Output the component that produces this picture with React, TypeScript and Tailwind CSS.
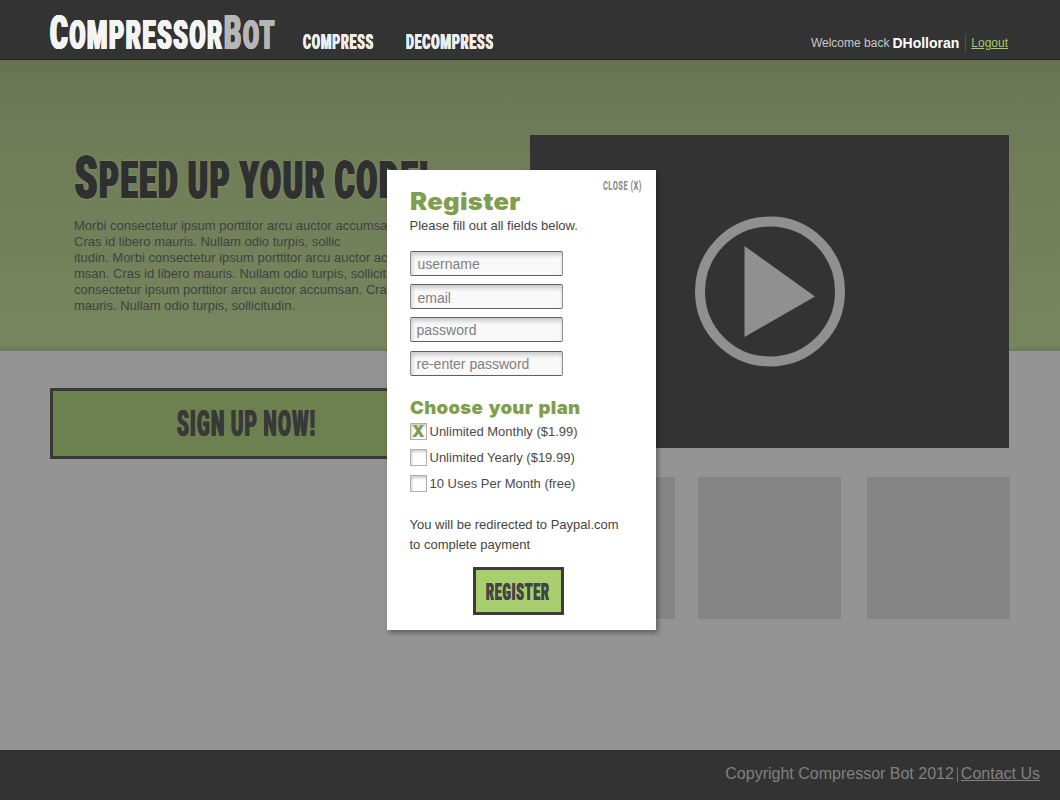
import { useLayoutEffect, useRef, useState } from "react";
import type { ReactNode } from "react";

/** Sets one line of type and condenses (or widens) it to fill its own box. */
function Fit({ className, children }: { className: string; children: ReactNode }) {
  const outer = useRef<HTMLSpanElement>(null);
  const inner = useRef<HTMLSpanElement>(null);
  const [scale, setScale] = useState(1);

  useLayoutEffect(() => {
    if (outer.current && inner.current) {
      setScale(outer.current.clientWidth / inner.current.offsetWidth);
    }
  }, []);

  return (
    <span ref={outer} className={`block whitespace-nowrap ${className}`}>
      <span ref={inner} className="inline-block origin-left" style={{ transform: `scaleX(${scale})` }}>
        {children}
      </span>
    </span>
  );
}

function Header() {
  return (
    <header className="flex h-[60px] items-start border-b border-[#262626] bg-[#333333] pl-[49.5px] pr-[52px]">
      <a className="mt-[5px] h-[55px]">
        <Fit className="h-[55px] w-[225.5px] font-['Roboto'] text-[41px] leading-[55px] font-black uppercase tracking-[3px]">
          <span className="text-[#f4f4f4] [text-shadow:0.7px_0_#f4f4f4,-0.7px_0_#f4f4f4,1.3px_0_#f4f4f4,-1.3px_0_#f4f4f4]">
            <span className="text-[48px]">C</span>ompressor
          </span>
          <span className="text-[#b6b6b6] [text-shadow:0.7px_0_#b6b6b6,-0.7px_0_#b6b6b6,1.3px_0_#b6b6b6,-1.3px_0_#b6b6b6]">
            <span className="text-[48px]">B</span>ot
          </span>
        </Fit>
      </a>
      <nav className="ml-[28px] mt-[30px] flex gap-[32px] font-['Roboto'] text-[20px] leading-[24px] font-black tracking-[1.4px] text-[#eeeeee] [text-shadow:0.5px_0_#eeeeee,-0.5px_0_#eeeeee]">
        <Fit className="w-[71px]">COMPRESS</Fit>
        <Fit className="w-[88px]">DECOMPRESS</Fit>
      </nav>
      <div className="ml-auto mt-[33px] flex h-[20px] items-center text-[12px] text-[#c8c8c8]">
        <span>Welcome back</span>
        <b className="ml-[3px] text-[14px] text-white">DHolloran</b>
        <span className="ml-[6px] mr-[5px] h-[18px] w-px bg-[#505050]" />
        <a className="text-[#a3cc66] underline">Logout</a>
      </div>
    </header>
  );
}

function Hero() {
  return (
    <section className="w-[480px] pt-[88px]">
      <h1 className="pl-[24.5px]">
        <Fit className="h-[60px] w-[355px] font-['Roboto'] text-[51px] leading-[60px] font-black uppercase tracking-[3.5px] [word-spacing:-2px] text-[#303030] [text-shadow:0.8px_0_#303030,-0.8px_0_#303030,1.5px_0_#303030,-1.5px_0_#303030,0_0_5px_#8a9a70]">
          <span className="text-[60px]">S</span>peed up your code!
        </Fit>
      </h1>
      <p className="mt-[10px] h-[98px] pl-[24px] text-[13px] leading-[16px] whitespace-nowrap text-[#424242]">
        Morbi consectetur ipsum porttitor arcu auctor accumsan.
        <br />
        Cras id libero mauris. Nullam odio turpis, sollic
        <br />
        itudin. Morbi consectetur ipsum porttitor arcu auctor accu
        <br />
        msan. Cras id libero mauris. Nullam odio turpis, sollicitudin.
        <br />
        consectetur ipsum porttitor arcu auctor accumsan. Cras id
        <br />
        mauris. Nullam odio turpis, sollicitudin.
      </p>
      <button className="mt-[72px] flex h-[71px] w-[392px] items-center justify-center border-[3px] border-[#393939] bg-[#6c814f]">
        <Fit className="w-[139px] text-left font-['Roboto'] text-[36px] leading-[42px] font-black tracking-[2.2px] [word-spacing:-1px] text-[#393939] [text-shadow:0.8px_0_#393939,-0.8px_0_#393939]">
          SIGN UP NOW!
        </Fit>
      </button>
    </section>
  );
}

function Showcase() {
  return (
    <section className="w-[480px] pt-[75px]">
      <div className="flex h-[313px] w-[479px] justify-center bg-[#333333] pt-[81px]">
        <svg width="151" height="151" viewBox="0 0 151 151">
          <circle cx="76" cy="75.5" r="70" fill="none" stroke="#909090" strokeWidth="10" />
          <path d="M50.5 30V121L121 80.5Z" fill="#909090" />
        </svg>
      </div>
      <div className="mt-[29px] flex justify-between">
        <div className="h-[142px] w-[145px] bg-[#858585]" />
        <div className="ml-[-3px] h-[142px] w-[143px] bg-[#858585]" />
        <div className="h-[142px] w-[143px] bg-[#858585]" />
      </div>
    </section>
  );
}

function Field({ type, name, className }: { type: string; name: string; className: string }) {
  return (
    <input
      type={type}
      placeholder={name}
      className={`block h-[25px] w-[153px] rounded-[2px] border border-x-[#8c8c8c] border-y-[#606060] bg-[#f9f9f9] text-[14px] text-[#444444] shadow-[inset_1px_3px_4px_#c9c9c9] placeholder:text-[#808080] placeholder:opacity-100 ${className}`}
    />
  );
}

function Plan({ label, checked }: { label: string; checked?: boolean }) {
  return (
    <label className="flex h-[26px] items-start text-[13px] leading-[17px] text-[#4a4a4a]">
      <span className="mr-[2.5px] flex h-[17px] w-[17px] items-center justify-center border border-[#b0b0b0] bg-white shadow-[inset_1px_2px_3px_#cccccc]">
        {checked && (
          <Fit className="w-[13px] font-['Inter'] text-[16px] leading-[15px] font-black text-[#7f9f4f]">
            X
          </Fit>
        )}
      </span>
      {label}
    </label>
  );
}

function RegisterDialog() {
  return (
    <div
      role="dialog"
      className="absolute top-[170px] left-[387px] h-[460px] w-[269px] bg-white pl-[23px] shadow-[2px_3px_5px_rgba(0,0,0,0.35)]"
    >
      <div className="flex h-[46px] justify-between">
        <h2 className="mt-[17px] -ml-[0.5px]">
          <Fit className="w-[111px] font-['Inter'] text-[24px] leading-[30px] font-black tracking-[0.3px] text-[#7f9f4f]">
            Register
          </Fit>
        </h2>
        <a className="mt-[6px] mr-[14px]">
          <Fit className="w-[39px] font-['Roboto'] text-[13.5px] leading-[18px] font-extrabold tracking-[0.8px] text-[#8a8a8a]">
            CLOSE (X)
          </Fit>
        </a>
      </div>
      <p className="-ml-[0.5px] h-[35px] text-[13px] leading-[20px] text-[#444444]">
        Please fill out all fields below.
      </p>
      <form>
        <Field type="text" name="username" className="pl-[6.5px]" />
        <Field type="text" name="email" className="mt-[8px] pt-[2px] pl-[6.5px]" />
        <Field type="password" name="password" className="mt-[8px] pl-[5.5px]" />
        <Field type="password" name="re-enter password" className="mt-[9px] pt-[1px] pl-[5.5px]" />
        <h3 className="mt-[20px] -ml-[0.5px] h-[27px]">
          <Fit className="w-[170px] font-['Inter'] text-[18px] leading-[24px] font-black tracking-[0.3px] [word-spacing:1.5px] text-[#7f9f4f]">
            Choose your plan
          </Fit>
        </h3>
        <Plan label="Unlimited Monthly ($1.99)" checked />
        <Plan label="Unlimited Yearly ($19.99)" />
        <Plan label="10 Uses Per Month (free)" />
        <p className="mt-[14px] -ml-[0.5px] h-[52px] text-[13px] leading-[20px] text-[#444444]">
          You will be redirected to Paypal.com
          <br />
          to complete payment
        </p>
        <button
          type="button"
          className="ml-[63px] flex h-[48px] w-[91px] items-center justify-center border-[3px] border-[#3c3c3c] bg-[#a8ce6d] pt-[2px] pr-[1px]"
        >
          <Fit className="w-[64px] text-left font-['Roboto'] text-[24px] leading-[28px] font-black tracking-[1.6px] text-[#444444] [text-shadow:0.4px_0_#444444,-0.4px_0_#444444]">
            REGISTER
          </Fit>
        </button>
      </form>
    </div>
  );
}

export default function App() {
  return (
    <div className="relative h-[800px] w-[1060px] overflow-hidden bg-[#939393] font-['Liberation_Sans',sans-serif]">
      <Header />
      <main className="flex h-[690px] bg-[linear-gradient(#667150_0px,#6c7957_30px,#75845c_240px,#75855c_286px,#6d7a58_291px,#949494_291px)] pl-[50px]">
        <Hero />
        <Showcase />
      </main>
      <footer className="flex h-[50px] items-center justify-end bg-[#333333] pr-[20px] pb-[2px] text-[16px] text-[#818181]">
        <span>Copyright Compressor Bot 2012</span>
        <span className="ml-[3px] mr-[3px] h-[15px] w-px bg-[#707070]" />
        <a className="underline">Contact Us</a>
      </footer>
      <RegisterDialog />
    </div>
  );
}
